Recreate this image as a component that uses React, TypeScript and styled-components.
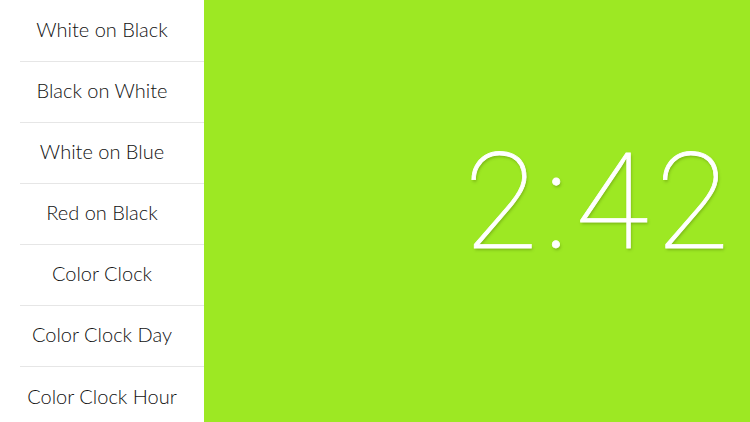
import React from 'react';
import styled, { createGlobalStyle } from 'styled-components';

const GlobalStyle = createGlobalStyle`
  html, body {
    margin: 0;
    padding: 0;
    width: 750px;
    height: 422px;
    overflow: hidden;
  }
`;

const modes = [
  'White on Black',
  'Black on White',
  'White on Blue',
  'Red on Black',
  'Color Clock',
  'Color Clock Day',
  'Color Clock Hour',
];

const Screen = styled.div`
  display: flex;
  width: 750px;
  height: 422px;
  overflow: hidden;
`;

const Sidebar = styled.ul`
  width: 204px;
  flex: none;
  margin: 0;
  padding: 1px 0 0;
  list-style: none;
  background: #ffffff;
  display: flex;
  flex-direction: column;
`;

const Row = styled.li<{ $last?: boolean }>`
  height: 61px;
  flex: none;
  display: flex;
  align-items: center;
  justify-content: center;
  margin-left: 20px;
  padding-right: 20px;
  padding-bottom: 4px;
  box-sizing: border-box;
  border-bottom: ${(p) => (p.$last ? 'none' : '1px solid #e6e6e6')};
  font-family: 'Lato', 'Open Sans', sans-serif;
  font-weight: 300;
  font-size: 20px;
  color: #111111;
  white-space: nowrap;
`;

const Stage = styled.div`
  flex: 1;
  background: #9de823;
  display: flex;
  align-items: center;
  justify-content: flex-end;
  padding-right: 21px;
`;

const Time = styled.div`
  font-family: 'Roboto', 'Lato', sans-serif;
  font-weight: 100;
  font-size: 134px;
  line-height: 1;
  color: #ffffff;
  -webkit-text-stroke: 0.8px #ffffff;
  letter-spacing: 7px;
  margin-right: -7px;
  text-shadow: 1px 2px 3px rgba(60, 90, 0, 0.35);
  margin-top: -16px;
`;

const App = () => {
  return (
    <Screen>
      <GlobalStyle />
      <Sidebar>
        {modes.map((m, i) => (
          <Row key={m} $last={i === modes.length - 1}>
            {m}
          </Row>
        ))}
      </Sidebar>
      <Stage>
        <Time>2:42</Time>
      </Stage>
    </Screen>
  );
};

export default App;
